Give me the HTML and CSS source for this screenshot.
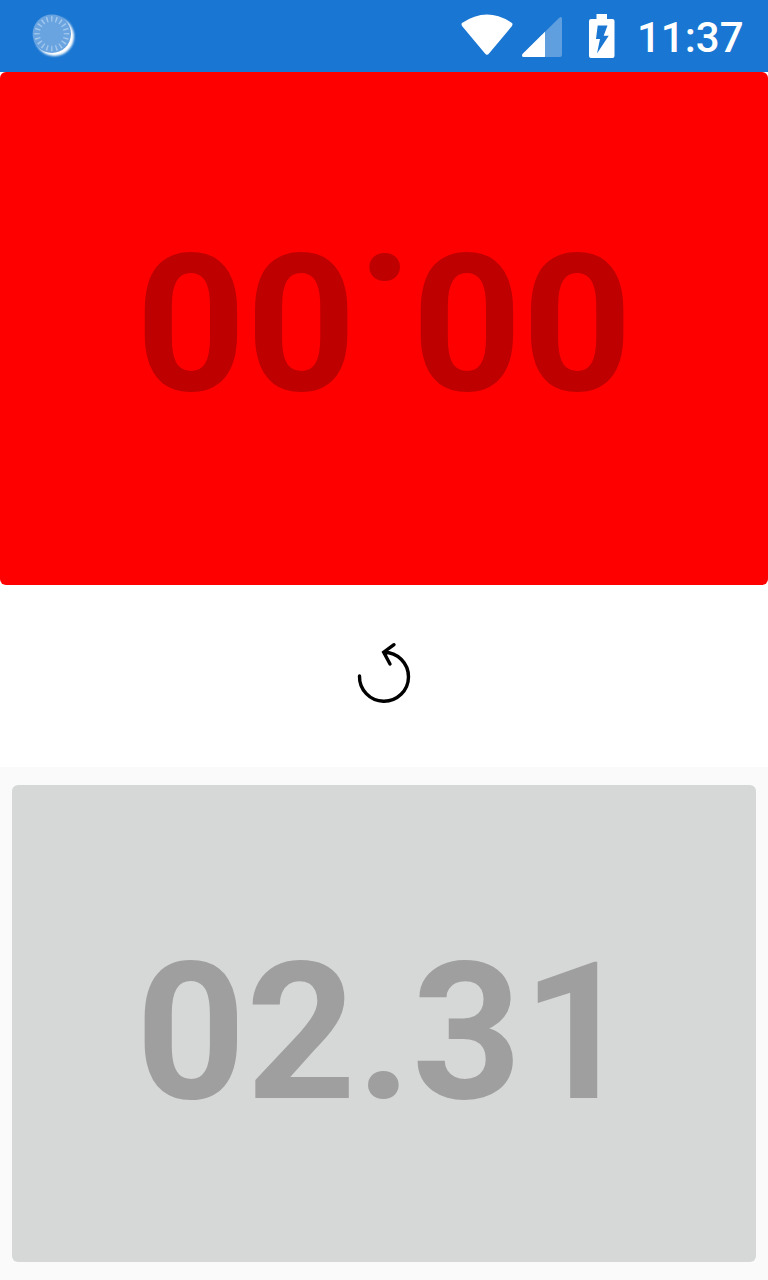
FILE: index.html
```html
<!DOCTYPE html>
<html lang="en"><head><meta charset="utf-8"><title>Chess clock</title><link rel="stylesheet" href="styles.css"></head>
<body>
<div class="screen">
<header class="status">
<svg class="sync" viewBox="0 0 48 48"><defs><filter id="soft" x="-20%" y="-20%" width="140%" height="140%"><feGaussianBlur stdDeviation="0.8"/></filter></defs><circle cx="24.4" cy="24.4" r="19.6" fill="#fff" filter="url(#soft)"/><circle cx="21.8" cy="21.8" r="19.2" fill="#69a4e1"/><circle cx="21.8" cy="21.8" r="14.7" fill="none" stroke="#a3c8ed" stroke-width="5.5" pathLength="200" stroke-dasharray="3 7" stroke-dashoffset="1.5"/></svg>
<span class="spacer"></span>
<svg class="wifi" viewBox="0 0 52 42"><path d="M1 9Q26-8 51 9Q52 10 51 12L28 39.500Q26 42 24 39.500L1 12Q0 10 1 9Z" fill="#fff"/></svg>
<svg class="signal" viewBox="0 0 42 42"><path d="M3 41Q0 41 1.500 38L38 2Q41 -0.500 41 3V39Q41 41 39 41Z" fill="#5f9fdf"/><path d="M3 41Q0 41 1.500 38L24 15.800V41Z" fill="#fff"/></svg>
<svg class="battery" viewBox="0 0 26 44"><path fill="#fff" fill-rule="evenodd" d="M7.500 0H18V5H23.500Q25.500 5 25.500 7V42Q25.500 44 23.500 44H2Q0 44 0 42V7Q0 5 2 5H7.500ZM8.700 11.500L7 25H11L8 39.500L19.700 21.700H14.700L18.500 11.500Z"/></svg>
<time class="clock">11:37</time>
</header>
<main class="main">
<button class="timer timer-top"><span class="digits">00.00</span></button>
<div class="controls"><svg class="reset" viewBox="0 0 60 66"><path d="M5.500 35A24.500 24.500 0 1 0 30 11.200M40 3.700L29.700 11.200L36 23" fill="none" stroke="#000" stroke-width="3.4" stroke-linecap="round"/></svg></div>
<section class="bottom"><button class="timer timer-bottom"><span class="digits">02.31</span></button></section>
</main>
</div>
</body></html>
```

FILE: styles.css
```css
* { box-sizing: border-box; }
body { margin: 0; background: #fff; font-family: Roboto, sans-serif; }
.screen { width: 768px; height: 1280px; display: flex; flex-direction: column; overflow: hidden; }
.status { height: 72px; background: #1976d2; display: flex; align-items: flex-start; padding: 0 24.5px 0 30px; color: #fff; }
.sync { width: 48px; height: 48px; margin-top: 12px; }
.spacer { flex: 1; }
.wifi { width: 52px; height: 42px; margin-top: 14px; }
.signal { width: 42px; height: 42px; margin: 16px 0 0 8px; }
.battery { width: 26px; height: 44px; margin: 14px 0 0 26px; }
.clock { font-size: 42px; font-weight: 500; line-height: 50px; margin: 13px 0 0 21.5px; }
.main { flex: 1; display: flex; flex-direction: column; }
.timer { border: 0; margin: 0; padding: 18px 0 0; display: flex; align-items: center; justify-content: center; width: 100%; font: 700 192px/225px Roboto, sans-serif; }
.timer-top { height: 513px; background: #f00; border-radius: 6px; color: #be0000; transform: rotate(180deg); }
.controls { height: 182px; display: flex; justify-content: center; padding-top: 56px; }
.reset { width: 60px; height: 66px; }
.bottom { height: 513px; background: #fafafa; padding: 18px 12px; }
.timer-bottom { height: 477px; background: #d6d8d7; border-radius: 6px; color: #9f9f9f; }
```
